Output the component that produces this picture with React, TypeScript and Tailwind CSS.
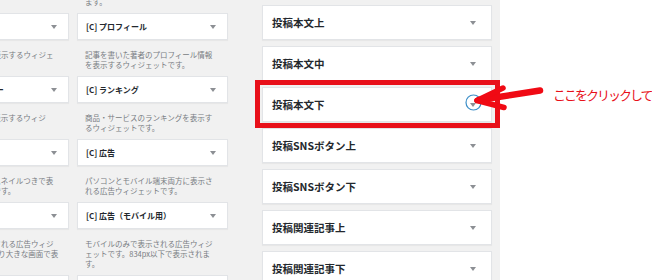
const font = { fontFamily: '"Noto Sans CJK JP", "Noto Sans", sans-serif' };

type Widget = { title: string; desc: string[] };

const rows: [Widget, Widget][] = [
  [
    { title: "[C] 新着記事", desc: ["新着記事のリストを表示するウィジェ", "ットです。", ""] },
    { title: "[C] 人気記事", desc: ["人気記事のリストを表示するウィジェッ", "トです。ランキング形式で表示され", "ます。"] },
  ],
  [
    { title: "[C] 新着記事", desc: ["新着記事のリストを表示するウィジェ", "ットです。"] },
    { title: "[C] プロフィール", desc: ["記事を書いた著者のプロフィール情報", "を表示するウィジェットです。"] },
  ],
  [
    { title: "[C] ボックスメニュー", desc: ["ボックスメニューを表示するウィジ", "ェットです。"] },
    { title: "[C] ランキング", desc: ["商品・サービスのランキングを表示す", "るウィジェットです。"] },
  ],
  [
    { title: "[C] 人気記事", desc: ["人気記事の一覧をサムネイルつきで表", "示するウィジェットです。"] },
    { title: "[C] 広告", desc: ["パソコンとモバイル端末両方に表示さ", "れる広告ウィジェットです。"] },
  ],
  [
    { title: "[C] 広告（PC用）", desc: ["パソコンのみで表示される広告ウィジ", "ェットです。834pxより大きな画面で表", "示されます。"] },
    { title: "[C] 広告（モバイル用）", desc: ["モバイルのみで表示される広告ウィジ", "ェットです。834px以下で表示されま", "す。"] },
  ],
  [
    { title: "[C] 目次", desc: ["目次を表示するウィジェットです。"] },
    { title: "[C] ナビカード", desc: ["ナビカードを表示するウィジェットです。"] },
  ],
];

const sidebars = [
  "投稿本文上",
  "投稿本文中",
  "投稿本文下",
  "投稿SNSボタン上",
  "投稿SNSボタン下",
  "投稿関連記事上",
  "投稿関連記事下",
];

function Caret() {
  return (
    <span className="w-0 h-0 border-l-[3px] border-r-[3px] border-t-[4px] border-l-transparent border-r-transparent border-t-[#8c8f94]" />
  );
}

function WidgetCell({ w }: { w: Widget }) {
  return (
    <div className="flex flex-col">
      <div className="h-[27px] bg-white border border-[#e2e4e7] shadow-[0_1px_1px_rgba(0,0,0,0.04)] flex items-center justify-between pl-[8px] pr-[11px]">
        <span className="text-[8px] font-bold text-[#23282d] whitespace-nowrap">{w.title}</span>
        <Caret />
      </div>
      <div className="mt-[10px] pb-[3px] pl-[8px] text-[7.5px] leading-[10px] text-[#787c82] whitespace-nowrap">
        {w.desc.map((l, i) => (
          <div key={i} className="h-[10px]">{l}</div>
        ))}
      </div>
    </div>
  );
}

export default function App() {
  return (
    <div className="relative w-[652px] h-[280px] overflow-hidden bg-white flex" style={font}>
      <div className="w-[500px] shrink-0 bg-[#f1f1f1] flex">
        <div className="w-[262px] shrink-0">
          <div className="-ml-[82px] mt-[-60px] grid grid-cols-[151px_151px] gap-x-[8px] gap-y-[3px]">
            {rows.map(([a, b], i) => (
              <div key={i} className="contents">
                <WidgetCell w={a} />
                <WidgetCell w={b} />
              </div>
            ))}
          </div>
        </div>
        <div className="w-[230px] shrink-0 pt-[5px] flex flex-col gap-[6px]">
          {sidebars.map((s) => (
            <div
              key={s}
              className="h-[35px] shrink-0 bg-white border border-[#e2e4e7] shadow-[0_1px_1px_rgba(0,0,0,0.04)] flex items-center justify-between pl-[9px] pr-[15px]"
            >
              <span className="text-[10.5px] font-bold text-[#23282d] whitespace-nowrap">{s}</span>
              <Caret />
            </div>
          ))}
        </div>
      </div>

      {/* annotation overlay */}
      <div className="absolute left-[255px] top-[80px] w-[245px] h-[48px] border-[5px] border-[#e8101a]" />
      <svg className="absolute left-0 top-0" width="652" height="280" viewBox="0 0 652 280">
        <circle cx="473.5" cy="102.5" r="7.5" fill="none" stroke="#3d8fc8" strokeWidth="1.2" />
        <g stroke="#f00a14" strokeLinecap="round" fill="none">
          <line x1="479" y1="100" x2="540" y2="90.5" strokeWidth="6.5" />
          <line x1="477" y1="100.5" x2="503" y2="88" strokeWidth="5.5" />
          <line x1="477" y1="100.5" x2="504" y2="107.5" strokeWidth="5.5" />
        </g>
      </svg>
      <div className="absolute left-[553px] top-[86px] text-[13px] leading-[18px] tracking-[-2px] text-[#e8101a] whitespace-nowrap">
        ここをクリックして
      </div>
    </div>
  );
}
